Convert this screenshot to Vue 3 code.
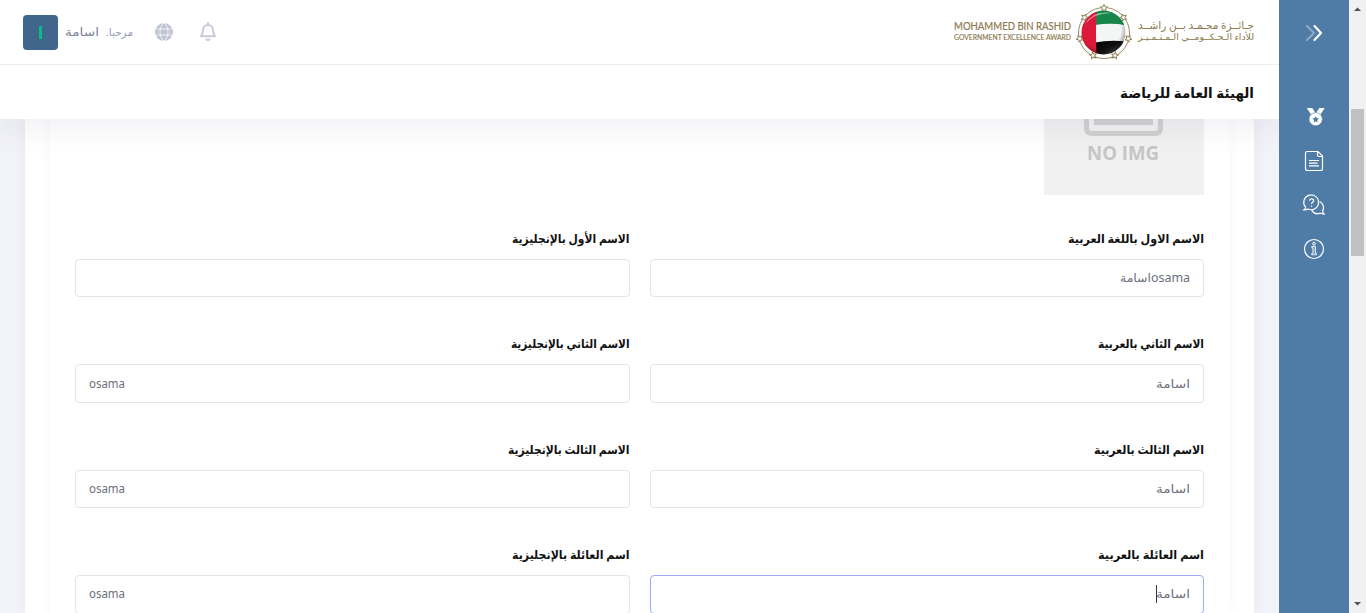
<script setup>
const rows = [
  { ar: 'الاسم الاول باللغة العربية', arW: 136, arVal: 'osamaاسامة', valW: 70, en: 'الاسم الأول بالإنجليزية', enW: 117.5, enVal: '' },
  { ar: 'الاسم الثاني بالعربية', arW: 106, arVal: 'اسامة', valW: 34, en: 'الاسم الثاني بالإنجليزية', enW: 118.5, enVal: 'osama' },
  { ar: 'الاسم الثالث بالعربية', arW: 110, arVal: 'اسامة', valW: 34, en: 'الاسم الثالث بالإنجليزية', enW: 121.5, enVal: 'osama' },
  { ar: 'اسم العائلة بالعربية', arW: 106, arVal: 'اسامة', valW: 34, en: 'اسم العائلة بالإنجليزية', enW: 117.5, enVal: 'osama', focus: true },
]
const stars = Array.from({ length: 7 }, (_, i) => (i * 360) / 7)
const star = 'M0-3.6 1-1.2 3.5-1.1 1.6.5 2.2 3 0 1.6-2.2 3-1.6.5-3.5-1.1-1-1.2Z'
</script>

<template>
  <div class="page">
    <div class="main">
      <header class="topbar">
        <div class="user">
          <div class="avatar"><i></i></div>
          <svg class="name" width="34" height="20"><text x="34" y="14" textLength="34" lengthAdjust="spacingAndGlyphs" direction="rtl">اسامة</text></svg>
          <svg class="hello" width="29" height="20"><text x="27" y="14" textLength="27" lengthAdjust="spacingAndGlyphs" direction="rtl">مرحبا.</text></svg>
          <svg class="globe" width="18" height="18" viewBox="0 0 18 18">
            <circle cx="9" cy="9" r="9" fill="#bfc4d5" />
            <path d="M0 6h18M0 12h18M9 0C3.600 3.600 3.600 14.400 9 18M9 0c5.400 3.600 5.400 14.400 0 18" fill="none" stroke="#fff" stroke-width=".8" />
          </svg>
          <svg class="bell" width="18" height="20" viewBox="0 0 18 20">
            <path d="M9 1v2M2 14.200c1.500-1.600 2-3 2-6.200 0-3 2.200-5 5-5s5 2 5 5c0 3.200.5 4.600 2 6.200Z" fill="none" stroke="#c5cad9" stroke-width="1.900" stroke-linejoin="round" stroke-linecap="round" />
            <path d="M6.400 16.800h5.200a2.600 2.300 0 0 1-5.200 0Z" fill="#c5cad9" />
          </svg>
        </div>
        <svg class="logo" width="304" height="64" viewBox="0 0 304 64">
          <defs>
            <clipPath id="ball"><circle cx="153.500" cy="32.500" r="22" /></clipPath>
            <radialGradient id="shade" cx=".45" cy=".42" r=".6">
              <stop offset=".75" stop-color="#000" stop-opacity="0" />
              <stop offset="1" stop-color="#000" stop-opacity=".4" />
            </radialGradient>
            <linearGradient id="ink" x2="1" y2="1">
              <stop offset="0" stop-color="#000" />
              <stop offset=".45" stop-color="#111" />
              <stop offset="1" stop-color="#999" />
            </linearGradient>
          </defs>
          <g class="gold">
            <text x="4" y="30" font-size="11" textLength="117" lengthAdjust="spacingAndGlyphs" stroke="#8b7a4e" stroke-width=".2">MOHAMMED BIN RASHID</text>
            <text x="4" y="39.500" font-size="6.800" textLength="117" lengthAdjust="spacingAndGlyphs" stroke="#8b7a4e" stroke-width=".15">GOVERNMENT EXCELLENCE AWARD</text>
            <text x="304" y="29" font-size="11" textLength="116" lengthAdjust="spacingAndGlyphs" direction="rtl">جـائــزة محـمـد بــن راشــد</text>
            <text x="304" y="40" font-size="9" textLength="116" lengthAdjust="spacingAndGlyphs" direction="rtl">للأداء الـحـكــومــي الـمـتـمـيـز</text>
          </g>
          <circle cx="154" cy="33" r="25.500" fill="none" stroke="#9c8b5c" stroke-width="1" />
          <g clip-path="url(#ball)">
            <rect x="131" y="10" width="46" height="46" fill="#f4f5f5" />
            <path d="M145 9h32v16.500q-15-3-32-.5Z" fill="#16864a" />
            <path d="M145 42.500q15-3 32-1v15h-32Z" fill="url(#ink)" />
            <path d="M131 10h15.500q-1 22 0 46H131Z" fill="#dc1938" />
            <path d="M135 24q8-14 27-11-18 0-27 11Z" fill="#fff" opacity=".5" />
            <circle cx="153.500" cy="32.500" r="22" fill="url(#shade)" />
          </g>
          <path v-for="a in stars" :key="a" :d="star" :transform="`translate(154 33) rotate(${a}) translate(0 -25)`" fill="#fff" stroke="#8b7a4e" stroke-width=".9" />
        </svg>
      </header>
      <div class="subbar">
        <svg width="136" height="30"><text x="136" y="18.500" textLength="134" lengthAdjust="spacingAndGlyphs" direction="rtl">الهيئة العامة للرياضة</text></svg>
      </div>
      <div class="content">
        <div class="outer">
          <div class="card">
            <div class="photo">
              <svg width="160" height="76" viewBox="0 0 160 76">
                <path d="M42.500-10V9q0 5.500 5.500 5.500h63q5.500 0 5.500-5.500v-19" fill="none" stroke="#d0d0d0" stroke-width="5" />
                <path d="M50-10h59V6H50Z" fill="#d0d0d0" />
                <text x="43" y="41" textLength="72" lengthAdjust="spacingAndGlyphs">NO IMG</text>
              </svg>
            </div>
            <div class="form">
              <div v-for="r in rows" :key="r.ar" class="row">
                <div class="field">
                  <svg class="label" width="200" height="24"><text x="199.500" y="12" :textLength="r.enW" lengthAdjust="spacingAndGlyphs" direction="rtl">{{ r.en }}</text></svg>
                  <div class="input ltr">
                    <svg v-if="r.enVal" width="36" height="24"><text x="0" y="16.400" textLength="36" lengthAdjust="spacingAndGlyphs">{{ r.enVal }}</text></svg>
                  </div>
                </div>
                <div class="field">
                  <svg class="label" width="200" height="24"><text x="200" y="12" :textLength="r.arW" lengthAdjust="spacingAndGlyphs" direction="rtl">{{ r.ar }}</text></svg>
                  <div class="input" :class="{ focus: r.focus }">
                    <i v-if="r.focus" class="caret"></i>
                    <svg :width="r.valW" height="24"><text :x="r.valW" y="16.400" :textLength="r.valW" lengthAdjust="spacingAndGlyphs" direction="rtl">{{ r.arVal }}</text></svg>
                  </div>
                </div>
              </div>
            </div>
          </div>
        </div>
      </div>
    </div>
    <nav class="sidebar">
      <svg class="chevrons" width="18" height="18" viewBox="0 0 18 18" fill="none" stroke="#fff" stroke-width="2.200" stroke-linecap="round" stroke-linejoin="round">
        <path d="m2 2 7 7-7 7" opacity=".35" />
        <path d="m9.500 2 6.500 7-6.500 7" />
      </svg>
      <svg class="medal" width="20" height="20" viewBox="0 0 20 20">
        <path d="M.8 1h5.400l3 4.600L5 7.600ZM18.700 1h-5.400l-3 4.600 4.200 2Z" fill="#fff" />
        <circle cx="9.700" cy="12.200" r="6.600" fill="#fff" stroke="#4e7ca6" stroke-width=".5" />
        <path d="m9.700 9 1 2.100 2.300.3-1.700 1.600.4 2.400-2-1.200-2 1.200.4-2.400-1.700-1.600 2.300-.3Z" fill="#4e7ca6" />
      </svg>
      <svg class="doc" width="20" height="22" viewBox="0 0 20 22" fill="none" stroke="#fff" stroke-width="1.200">
        <path d="M3.500 1.500H14l4.500 4.500v12.500q0 2-2 2h-13q-2 0-2-2v-15q0-2 2-2ZM13.500 1.500V5q0 1.500 1.500 1.500h3.500M5 10.500h10M5 13.200h8.500M5 15.900h10" />
      </svg>
      <svg width="22" height="22" viewBox="0 0 22 22" fill="none" stroke="#fff" stroke-width="1.200">
        <path d="M1 15.800q1.500-1 1.600-2.600A7.400 7.400 0 1 1 5 15q-1.800 1-4 .8ZM16.600 7.500a6.700 6.700 0 0 1 3 9.500q.2 2 1.500 3-2 .3-3.800-.9-5.500 2-8.600-3" />
        <path d="M6.500 6.700q.2-1.900 2.100-1.900t2.100 1.700c0 1.500-2.100 1.600-2.100 3.600M8.600 11.500v1.200" />
      </svg>
      <svg width="22" height="22" viewBox="0 0 22 22" fill="none" stroke="#fff">
        <circle cx="11" cy="11" r="9.500" stroke-width="1.200" />
        <circle cx="11" cy="5.700" r="1.400" stroke-width=".8" fill="#7fa2c2" />
        <path d="M8.800 8.400h3.700v7h1v1.400H8.700v-1.400h1.200V9.800H8.800Z" stroke-width=".8" fill="#7fa2c2" />
      </svg>
    </nav>
    <div class="scrollbar">
      <svg width="7" height="4"><path d="M0 4h7L3.500.5Z" fill="#505050" /></svg>
      <div class="thumb"></div>
      <svg class="down" width="7" height="4"><path d="M0 0h7L3.500 3.500Z" fill="#505050" /></svg>
    </div>
  </div>
</template>

<style>
body { overflow: hidden; }
</style>

<style scoped>
.page { display: flex; width: 1366px; height: 613px; overflow: hidden; font-family: "Noto Sans", "DejaVu Sans", sans-serif; background: #f2f3f8; }
svg { display: block; flex: none; overflow: visible; }
svg text { font-family: "Noto Sans", "DejaVu Sans", sans-serif; }
.main { width: 1279px; flex: none; display: flex; flex-direction: column; }
.topbar { height: 64px; flex: none; border-bottom: 1px solid #ebedf2; background: #fff; display: flex; justify-content: space-between; padding: 0 25px 0 23px; z-index: 2; }
.user { display: flex; align-items: center; }
.avatar { width: 35px; height: 35px; border-radius: 4px; background: #40668c; display: flex; align-items: center; justify-content: center; }
.avatar i { width: 3px; height: 13px; background: #0abb87; }
.name { margin-left: 7px; font-size: 12px; fill: #7c819c; }
.hello { margin-left: 7px; font-size: 11px; fill: #959cb6; }
.globe { margin-left: 20px; }
.bell { margin-left: 26px; }
.gold { fill: #8b7a4e; }
.gold text { font-family: Lato, "DejaVu Sans", sans-serif; }
.subbar { height: 54px; flex: none; background: #fff; padding: 14px 25px 0; box-sizing: border-box; display: flex; justify-content: flex-end; align-items: flex-start; box-shadow: 0 10px 30px rgba(82, 63, 105, .08); z-index: 1; font-size: 14px; font-weight: 600; fill: #111; }
.content { flex: 1; min-height: 0; padding: 0 25px; }
.outer { height: 100%; padding: 0 25px; background: #fff; box-shadow: 0 0 13px rgba(82, 63, 105, .05); }
.card { height: 100%; padding: 0 25px; background: #fff; box-shadow: 0 0 13px rgba(82, 63, 105, .04); }
.photo { width: 160px; height: 76px; margin-left: auto; background: #f1f1f1; overflow: hidden; font-size: 19px; font-weight: 700; }
.photo text { fill: #c6c6c6; font-family: "Open Sans", sans-serif; }
.form { padding-top: 36px; }
.row { display: grid; grid-template-columns: 555px 554px; gap: 20px; height: 105.400px; }
.label { margin-left: auto; font-size: 12px; font-weight: 600; fill: #111; height: 28px; }
.input { height: 38.400px; box-sizing: border-box; border: 1px solid #e2e5ec; border-radius: 4px; padding: 0 13px; display: flex; align-items: center; justify-content: flex-end; font-size: 12px; fill: #6b6f7e; }
.ltr { justify-content: flex-start; }
.focus { border-color: #9aabff; }
.caret { width: 1px; height: 18px; margin-right: -1px; background: #333; }
.sidebar { width: 70px; flex: none; background: #4e7ca6; display: flex; flex-direction: column; align-items: center; z-index: 3; }
.sidebar svg + svg { margin-top: 22px; }
.sidebar .chevrons { margin-top: 24px; }
.sidebar .chevrons + .medal { margin-top: 65px; margin-left: 3px; }
.sidebar .medal + .doc { margin-top: 23px; }
.scrollbar { width: 17px; background: #f1f1f1; display: flex; flex-direction: column; align-items: center; padding-top: 7px; box-sizing: border-box; }
.thumb { width: 13px; height: 147px; margin-top: 98px; background: #c1c1c1; }
.down { margin-top: auto; margin-bottom: 7px; }
</style>
